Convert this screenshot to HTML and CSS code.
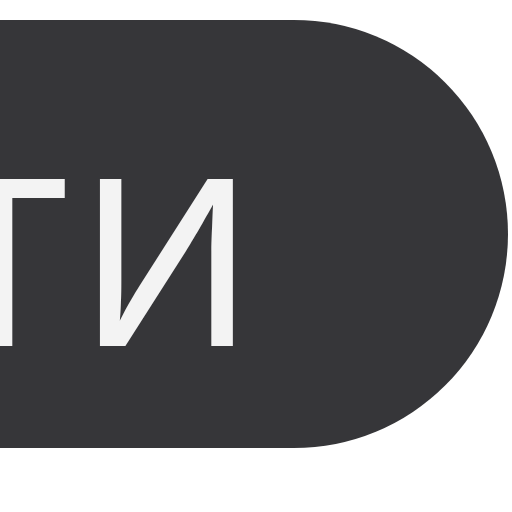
FILE: index.html
```html
<!DOCTYPE html>
<html lang="ru">
<head>
<meta charset="utf-8">
<link rel="stylesheet" href="styles.css">
</head>
<body>
<div class="stage">
  <button class="pill" type="button"><span class="label">ВОЙТИ</span></button>
</div>
</body>
</html>
```
FILE: styles.css
```css
html, body {
  margin: 0;
  padding: 0;
  background: #ffffff;
}
.stage {
  width: 512px;
  height: 512px;
  overflow: hidden;
  box-sizing: border-box;
  padding: 20px 4px 0 0;
  display: flex;
  justify-content: flex-end;
  align-items: flex-start;
}
.pill {
  flex: none;
  height: 428px;
  box-sizing: border-box;
  border: 0;
  margin: 0;
  border-radius: 214px;
  background: #363639;
  color: #f3f3f3;
  display: flex;
  align-items: center;
  padding: 56px 251px 0 100px;
  font-family: Inter, "Noto Sans", sans-serif;
  font-weight: 400;
  font-size: 230px;
  line-height: 1;
  letter-spacing: 4px;
  white-space: nowrap;
}
.label {
  display: block;
}
```
